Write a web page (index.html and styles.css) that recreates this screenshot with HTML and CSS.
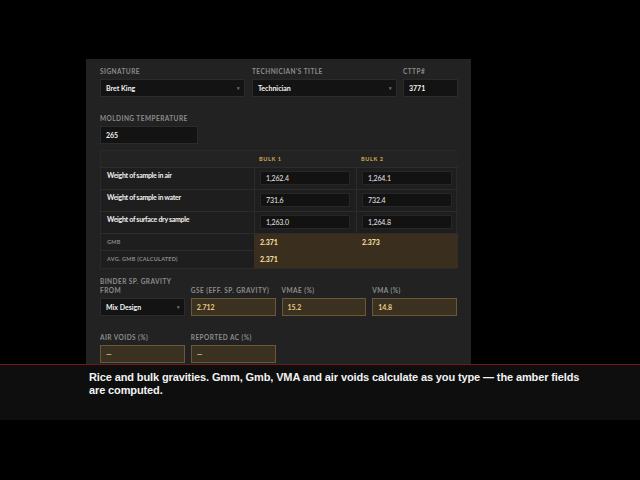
FILE: index.html
```html
<!DOCTYPE html>
<html>
<head>
<meta charset="utf-8">
<link rel="stylesheet" href="styles.css">
</head>
<body>
<div class="panel">
  <div class="row-top">
    <div class="field">
      <div class="label">Signature</div>
      <div class="input select">Bret King<span class="caret">▾</span></div>
    </div>
    <div class="field">
      <div class="label">Technician's Title</div>
      <div class="input select">Technician<span class="caret">▾</span></div>
    </div>
    <div class="field">
      <div class="label">CTTP#</div>
      <div class="input">3771</div>
    </div>
  </div>
  <div class="row-mold">
    <div class="field">
      <div class="label">Molding Temperature</div>
      <div class="input">265</div>
    </div>
  </div>
  <div class="table">
    <div class="td head"></div>
    <div class="td head th">Bulk 1</div>
    <div class="td head th">Bulk 2</div>

    <div class="td lbl">Weight of sample in air</div>
    <div class="td val"><div class="cellin">1,262.4</div></div>
    <div class="td val"><div class="cellin">1,264.1</div></div>

    <div class="td lbl">Weight of sample in water</div>
    <div class="td val"><div class="cellin">731.6</div></div>
    <div class="td val"><div class="cellin">732.4</div></div>

    <div class="td lbl">Weight of surface dry sample</div>
    <div class="td val"><div class="cellin">1,263.0</div></div>
    <div class="td val"><div class="cellin">1,264.8</div></div>

    <div class="td small">GMB</div>
    <div class="td amber">2.371</div>
    <div class="td amber">2.373</div>

    <div class="td small last">Avg. GMB (calculated)</div>
    <div class="td amber last">2.371</div>
    <div class="td amber last"></div>
  </div>
  <div class="section-label">Binder Sp. Gravity</div>
  <div class="grid4">
    <div class="field">
      <div class="label">From</div>
      <div class="input select">Mix Design<span class="caret">▾</span></div>
    </div>
    <div class="field">
      <div class="label">GSE (Eff. Sp. Gravity)</div>
      <div class="input computed">2.712</div>
    </div>
    <div class="field">
      <div class="label">VMAE (%)</div>
      <div class="input computed">15.2</div>
    </div>
    <div class="field">
      <div class="label">VMA (%)</div>
      <div class="input computed">14.8</div>
    </div>
  </div>
  <div class="grid4 air">
    <div class="field">
      <div class="label">Air Voids (%)</div>
      <div class="input computed">—</div>
    </div>
    <div class="field">
      <div class="label">Reported AC (%)</div>
      <div class="input computed">—</div>
    </div>
  </div>
</div>
<div class="caption">
  <p>Rice and bulk gravities. Gmm, Gmb, VMA and air voids calculate as you type — the amber fields are computed.</p>
</div>
</body>
</html>
```

FILE: styles.css
```css
html, body {
  margin: 0;
  padding: 0;
  background: #000;
}
body {
  width: 640px;
  height: 480px;
  overflow: hidden;
  font-family: "Lato", "Noto Sans", sans-serif;
}
.panel {
  margin-left: 86px;
  margin-top: 59px;
  width: 357px;
  height: 297px;
  padding: 8px 14px 0;
  background: #222222;
  overflow: hidden;
}
.label, .section-label {
  box-sizing: border-box;
  font-size: 6.5px;
  line-height: 8px;
  height: 9px;
  padding-top: 1px;
  font-weight: 700;
  letter-spacing: 0.45px;
  text-transform: uppercase;
  color: #8c8c8c;
  margin-bottom: 3px;
  white-space: nowrap;
}
.input {
  box-sizing: border-box;
  height: 18px;
  background: #131313;
  border: 1px solid #2b2b2b;
  color: #f2f2f2;
  font-size: 7px;
  font-weight: 700;
  line-height: 16px;
  padding-left: 5px;
  position: relative;
  white-space: nowrap;
}
.select .caret {
  position: absolute;
  right: 4px;
  top: 0;
  font-size: 5px;
  color: #6e6e6e;
}
.row-top {
  display: grid;
  grid-template-columns: 145px 145px 54px;
  column-gap: 7px;
}
.row-top .field:nth-child(3) { margin-left: -1px; }
.row-mold {
  margin-top: 17px;
  width: 98px;
}
.table {
  margin-top: 6px;
  display: grid;
  grid-template-columns: 153px 102px 102px;
  background: #1e1e1e;
  border: 1px solid #2a2a2a;
  box-sizing: border-box;
}
.td {
  box-sizing: border-box;
  border-bottom: 1px solid #2c2c2c;
}
.td.last { border-bottom: none; }
.head {
  height: 17px;
  background: #232323;
}
.th {
  font-size: 5.5px;
  font-weight: 900;
  letter-spacing: 0.6px;
  text-transform: uppercase;
  color: #c9a04c;
  line-height: 16px;
  padding-left: 5px;
}
.lbl {
  height: 22px;
  padding: 3px 0 0 6px;
  font-size: 7px;
  line-height: 8px;
  font-weight: 700;
  color: #efefef;
  letter-spacing: -0.3px;
  white-space: nowrap;
}
.val {
  height: 22px;
  padding: 3px 6px 0 5px;
  border-left: 1px solid #2c2c2c;
}
.cellin {
  box-sizing: border-box;
  height: 14px;
  background: #121212;
  border: 1px solid #262626;
  color: #e6e6e6;
  font-size: 7px;
  line-height: 12px;
  padding-left: 5px;
  letter-spacing: -0.1px;
}
.small {
  height: 17px;
  font-size: 5.5px;
  line-height: 16px;
  font-weight: 700;
  letter-spacing: 0.25px;
  text-transform: uppercase;
  color: #8a8a8a;
  padding-left: 6px;
  white-space: nowrap;
}
.amber {
  height: 17px;
  background: #3a2f1f;
  border-bottom-color: #3a2f1f;
  color: #f3d79a;
  font-size: 7px;
  font-weight: 900;
  line-height: 16px;
  padding-left: 6px;
}
.section-label {
  margin-top: 8px;
  margin-bottom: 0;
}
.grid4 {
  display: grid;
  grid-template-columns: repeat(4, 1fr);
  column-gap: 6px;
}
.grid4.air {
  margin-top: 17px;
}
.computed {
  background: #3b3121;
  border: 1px solid #6a5837;
  color: #ebc982;
}
.caption {
  box-sizing: border-box;
  height: 56px;
  background: #0e0e0e;
  border-top: 1px solid #6e1c1c;
  padding: 6px 0 0 89px;
}
.caption p {
  margin: 0;
  width: 500px;
  font-family: "Liberation Sans", "Inter", sans-serif;
  font-weight: 700;
  font-size: 11px;
  line-height: 13px;
  letter-spacing: -0.12px;
  color: #f2f2f2;
}
```
